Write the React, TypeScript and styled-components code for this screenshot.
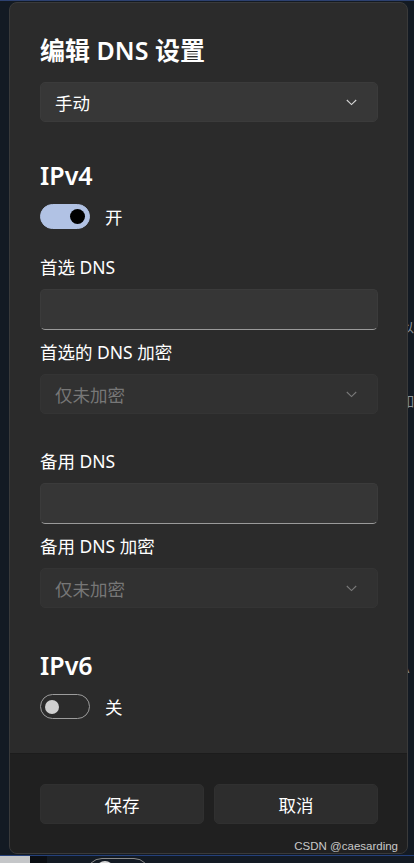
import React from "react";
import styled, { createGlobalStyle } from "styled-components";

const Global = createGlobalStyle`
  html, body { margin: 0; padding: 0; }
  body {
    background: #131a23;
    font-family: "Noto Sans", "Noto Sans CJK SC", sans-serif;
    color: #ffffff;
    width: 414px;
    height: 863px;
    overflow: hidden;
  }
`;

const Page = styled.div`
  position: relative;
  width: 414px;
  height: 863px;
  overflow: hidden;
  display: flex;
  flex-direction: column;
`;

const TopLine = styled.div`
  height: 1px;
  background: #2d4170;
  margin-bottom: 1px;
`;

const Dialog = styled.div`
  position: relative;
  z-index: 2;
  margin-left: 9px;
  width: 399px;
  height: 852px;
  box-sizing: border-box;
  border: 1px solid #3a3a3a;
  border-radius: 8px;
  background: #2b2b2b;
  display: flex;
  flex-direction: column;
  overflow: hidden;
`;

const Body = styled.div`
  flex: 1;
  padding: 30px 29px 0 30px;
  display: flex;
  flex-direction: column;
`;

const Title = styled.h1`
  margin: 0;
  font-size: 25px;
  line-height: 34px;
  font-weight: 600;
  letter-spacing: 0;
`;

const Heading = styled.h2<{ $top: number }>`
  margin: ${(p) => p.$top}px 0 0 0;
  font-size: 25px;
  line-height: 34px;
  font-weight: 600;
`;

const Label = styled.div<{ $top: number }>`
  margin-top: ${(p) => p.$top}px;
  font-size: 17.5px;
  line-height: 24px;
  color: #ffffff;
`;

const Select = styled.div<{ $top: number; $disabled?: boolean }>`
  margin-top: ${(p) => p.$top}px;
  height: 40px;
  box-sizing: border-box;
  border-radius: 5px;
  background: ${(p) => (p.$disabled ? "#313131" : "#373737")};
  border: 1px solid ${(p) => (p.$disabled ? "#343434" : "#3b3b3b")};
  display: flex;
  align-items: center;
  justify-content: space-between;
  padding: 0 20px 0 14px;
  font-size: 17.5px;
  color: ${(p) => (p.$disabled ? "#777777" : "#ffffff")};
`;

const Input = styled.div<{ $top: number }>`
  margin-top: ${(p) => p.$top}px;
  height: 41px;
  box-sizing: border-box;
  border-radius: 5px;
  background: #363636;
  border: 1px solid #3b3b3b;
  border-bottom: 1px solid #9a9a9a;
`;

const ToggleRow = styled.div<{ $top: number }>`
  margin-top: ${(p) => p.$top}px;
  display: flex;
  align-items: center;
  gap: 15px;
  height: 25px;
  font-size: 17.5px;
`;

const Track = styled.div<{ $on: boolean }>`
  width: 50px;
  height: 25px;
  box-sizing: border-box;
  border-radius: 13px;
  background: ${(p) => (p.$on ? "#b1c2e4" : "transparent")};
  border: 1px solid ${(p) => (p.$on ? "#b1c2e4" : "#9c9c9c")};
  display: flex;
  align-items: center;
  justify-content: ${(p) => (p.$on ? "flex-end" : "flex-start")};
  padding: 0 5px;
`;

const Knob = styled.div<{ $on: boolean }>`
  width: ${(p) => (p.$on ? 15 : 14)}px;
  height: ${(p) => (p.$on ? 15 : 14)}px;
  border-radius: 50%;
  background: ${(p) => (p.$on ? "#000000" : "#d0d0d0")};
  margin: ${(p) => (p.$on ? "0 -1px 0 0" : "0 0 0 -1px")};
`;

const Footer = styled.div`
  height: 100px;
  flex-shrink: 0;
  box-sizing: border-box;
  background: #202020;
  border-top: 1px solid #1c1c1c;
  padding: 30px 29px 0 30px;
`;

const Buttons = styled.div`
  display: grid;
  grid-template-columns: 1fr 1fr;
  gap: 10px;
`;

const Button = styled.button`
  height: 40px;
  border-radius: 5px;
  background: #2d2d2d;
  border: 1px solid #303030;
  color: #ffffff;
  font-family: "Noto Sans", "Noto Sans CJK SC", sans-serif;
  font-size: 17.5px;
  padding: 0;
`;

const Watermark = styled.div`
  position: absolute;
  right: 16px;
  bottom: 9px;
  z-index: 3;
  font-family: "Liberation Sans", "Noto Sans", sans-serif;
  font-size: 11.5px;
  line-height: 15px;
  color: #c9c9c9;
`;

const Fragments = styled.div<{ $y: number }>`
  position: absolute;
  left: 401px;
  top: ${(p) => p.$y}px;
  width: 13px;
  z-index: 1;
  font-size: 13px;
  line-height: 18px;
  color: #8e949c;
`;

const BottomStrip = styled.div`
  position: relative;
  flex: 1;
  border-top: 1px solid #24407a;
  margin-top: 1px;
  display: flex;
`;

const LightBlock = styled.div`
  width: 30px;
  background: #c4c6c8;
`;

const DarkBlock = styled.div`
  width: 17px;
  background: #0b0e13;
`;

const GhostToggle = styled.div`
  position: absolute;
  left: 86px;
  top: 2px;
  width: 62px;
  height: 30px;
  border: 1px solid #8a8a8a;
  border-radius: 16px;
`;

const GhostKnob = styled.div`
  position: absolute;
  left: 96px;
  top: 5px;
  width: 18px;
  height: 18px;
  border-radius: 50%;
  background: #d8d8d8;
`;

const Chevron = ({ color }: { color: string }) => (
  <svg width="11" height="7" viewBox="0 0 11 7" fill="none">
    <polyline points="0.8,1 5.5,5.6 10.2,1" stroke={color} strokeWidth="1.1" />
  </svg>
);

const Toggle = ({ on, label, top }: { on: boolean; label: string; top: number }) => (
  <ToggleRow $top={top}>
    <Track $on={on}>
      <Knob $on={on} />
    </Track>
    <span>{label}</span>
  </ToggleRow>
);

export default function App() {
  return (
    <>
      <Global />
      <Page>
        <TopLine />
        <Fragments $y={318}>以</Fragments>
        <Fragments $y={392}>如</Fragments>
        <Fragments $y={659}>A</Fragments>
        <Fragments $y={682}>t</Fragments>
        <Dialog>
          <Body>
            <Title>编辑 DNS 设置</Title>
            <Select $top={15}>
              <span>手动</span>
              <Chevron color="#d6d6d6" />
            </Select>

            <Heading $top={36}>IPv4</Heading>
            <Toggle on label="开" top={12} />

            <Label $top={26}>首选 DNS</Label>
            <Input $top={10} />
            <Label $top={10}>首选的 DNS 加密</Label>
            <Select $top={10} $disabled>
              <span>仅未加密</span>
              <Chevron color="#7a7a7a" />
            </Select>

            <Label $top={35}>备用 DNS</Label>
            <Input $top={10} />
            <Label $top={10}>备用 DNS 加密</Label>
            <Select $top={10} $disabled>
              <span>仅未加密</span>
              <Chevron color="#7a7a7a" />
            </Select>

            <Heading $top={40}>IPv6</Heading>
            <Toggle on={false} label="关" top={12} />
          </Body>
          <Footer>
            <Buttons>
              <Button>保存</Button>
              <Button>取消</Button>
            </Buttons>
          </Footer>
        </Dialog>
        <Watermark>CSDN @caesarding</Watermark>
        <BottomStrip>
          <LightBlock />
          <DarkBlock />
          <GhostToggle />
          <GhostKnob />
        </BottomStrip>
      </Page>
    </>
  );
}
